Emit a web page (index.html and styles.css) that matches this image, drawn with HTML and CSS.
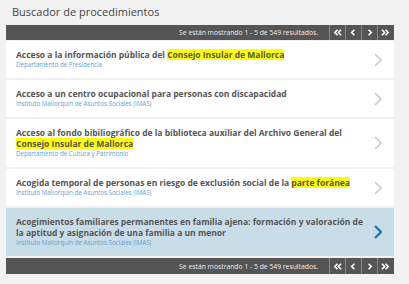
FILE: index.html
```html
<!DOCTYPE html>
<html lang="es">
<head>
    <meta charset="UTF-8">
    <title>Buscador de procedimientos</title>
    <link rel="stylesheet" href="styles.css">
</head>
<body>
    <div class="buscador">
        <h2>Buscador de procedimientos</h2>

        <div class="paginacion">
            <span class="info">Se están mostrando 1 - 5 de 549 resultados.</span>
            <a class="pag-btn" href="#"><svg viewBox="0 0 10 10"><polyline points="5,2 2,5 5,8"/><polyline points="9,2 6,5 9,8"/></svg></a>
            <a class="pag-btn" href="#"><svg viewBox="0 0 10 10"><polyline points="6,2 3,5 6,8"/></svg></a>
            <a class="pag-btn" href="#"><svg viewBox="0 0 10 10"><polyline points="4,2 7,5 4,8"/></svg></a>
            <a class="pag-btn" href="#"><svg viewBox="0 0 10 10"><polyline points="1,2 4,5 1,8"/><polyline points="5,2 8,5 5,8"/></svg></a>
        </div>

        <ul class="resultados">
            <li class="item">
                <div class="texto">
                    <div class="titulo">Acceso a la información pública del <mark>Consejo Insular de Mallorca</mark></div>
                    <div class="organo">Departamento de Presidencia</div>
                </div>
                <svg class="flecha" viewBox="0 0 8 14"><polyline points="1,1 7,7 1,13"/></svg>
            </li>
            <li class="item">
                <div class="texto">
                    <div class="titulo">Acceso a un centro ocupacional para personas con discapacidad</div>
                    <div class="organo">Instituto Mallorquín de Asuntos Sociales (IMAS)</div>
                </div>
                <svg class="flecha" viewBox="0 0 8 14"><polyline points="1,1 7,7 1,13"/></svg>
            </li>
            <li class="item">
                <div class="texto">
                    <div class="titulo">Acceso al fondo bibiliográfico de la biblioteca auxiliar del Archivo General del <mark>Consejo Insular de Mallorca </mark></div>
                    <div class="organo">Departamento de Cultura y Patrimonio</div>
                </div>
                <svg class="flecha" viewBox="0 0 8 14"><polyline points="1,1 7,7 1,13"/></svg>
            </li>
            <li class="item">
                <div class="texto">
                    <div class="titulo">Acogida temporal de personas en riesgo de exclusión social de la <mark>parte foránea</mark></div>
                    <div class="organo">Instituto Mallorquín de Asuntos Sociales (IMAS)</div>
                </div>
                <svg class="flecha" viewBox="0 0 8 14"><polyline points="1,1 7,7 1,13"/></svg>
            </li>
            <li class="item activo">
                <div class="texto">
                    <div class="titulo">Acogimientos familiares permanentes en familia ajena: formación y valoración de la aptitud y asignación de una familia a un menor</div>
                    <div class="organo">Instituto Mallorquín de Asuntos Sociales (IMAS)</div>
                </div>
                <svg class="flecha" viewBox="0 0 8 14"><polyline points="1,1 7,7 1,13"/></svg>
            </li>
        </ul>

        <div class="paginacion pie">
            <span class="info">Se están mostrando 1 - 5 de 549 resultados.</span>
            <a class="pag-btn" href="#"><svg viewBox="0 0 10 10"><polyline points="5,2 2,5 5,8"/><polyline points="9,2 6,5 9,8"/></svg></a>
            <a class="pag-btn" href="#"><svg viewBox="0 0 10 10"><polyline points="6,2 3,5 6,8"/></svg></a>
            <a class="pag-btn" href="#"><svg viewBox="0 0 10 10"><polyline points="4,2 7,5 4,8"/></svg></a>
            <a class="pag-btn" href="#"><svg viewBox="0 0 10 10"><polyline points="1,2 4,5 1,8"/><polyline points="5,2 8,5 5,8"/></svg></a>
        </div>
    </div>
</body>
</html>
```

FILE: styles.css
```css
body {
    margin: 0;
    background-color: #f2f2f2;
    font-family: "Open Sans", Arial, sans-serif;
    color: #555;
}

.buscador {
    width: 388px;
    padding: 0 0 0 6px;
}

h2 {
    margin: 0;
    padding: 5px 0 0 6px;
    height: 20px;
    font-size: 11px;
    font-weight: normal;
    line-height: 14px;
    color: #444;
}

/* Barra de paginacion */
.paginacion {
    display: flex;
    align-items: stretch;
    justify-content: flex-end;
    height: 15px;
    background-color: #555;
    padding-right: 1px;
}

.paginacion.pie {
    height: 16px;
}

.paginacion .info {
    align-self: center;
    font-size: 6.8px;
    color: #eee;
    margin-right: 11px;
}

.pag-btn {
    display: flex;
    align-items: center;
    justify-content: center;
    width: 15px;
    background-color: #555;
    border-left: 1px solid #888;
}

.pag-btn svg {
    width: 9px;
    height: 9px;
    fill: none;
    stroke: #fff;
    stroke-width: 1.8;
}

/* Lista de resultados */
.resultados {
    list-style: none;
    margin: 1px 0 0;
    padding: 0;
}

.item {
    display: flex;
    align-items: center;
    background-color: #fff;
    margin-bottom: 2px;
    padding: 8px 0 8px 10px;
}

.item .texto {
    width: 350px;
}

.titulo {
    font-size: 8.5px;
    font-weight: bold;
    line-height: 11px;
    color: #555;
}

.titulo mark {
    background-color: #ffff00;
    color: #555;
}

.organo {
    font-size: 6.2px;
    line-height: 10px;
    color: #5ba4d6;
}

.flecha {
    width: 8px;
    height: 14px;
    margin-left: 8px;
    fill: none;
    stroke: #ccc;
    stroke-width: 1.6;
}

.item.activo {
    background-color: #c8dde7;
}

.item.activo .flecha {
    stroke: #1f7cb0;
    stroke-width: 2.4;
}
```
